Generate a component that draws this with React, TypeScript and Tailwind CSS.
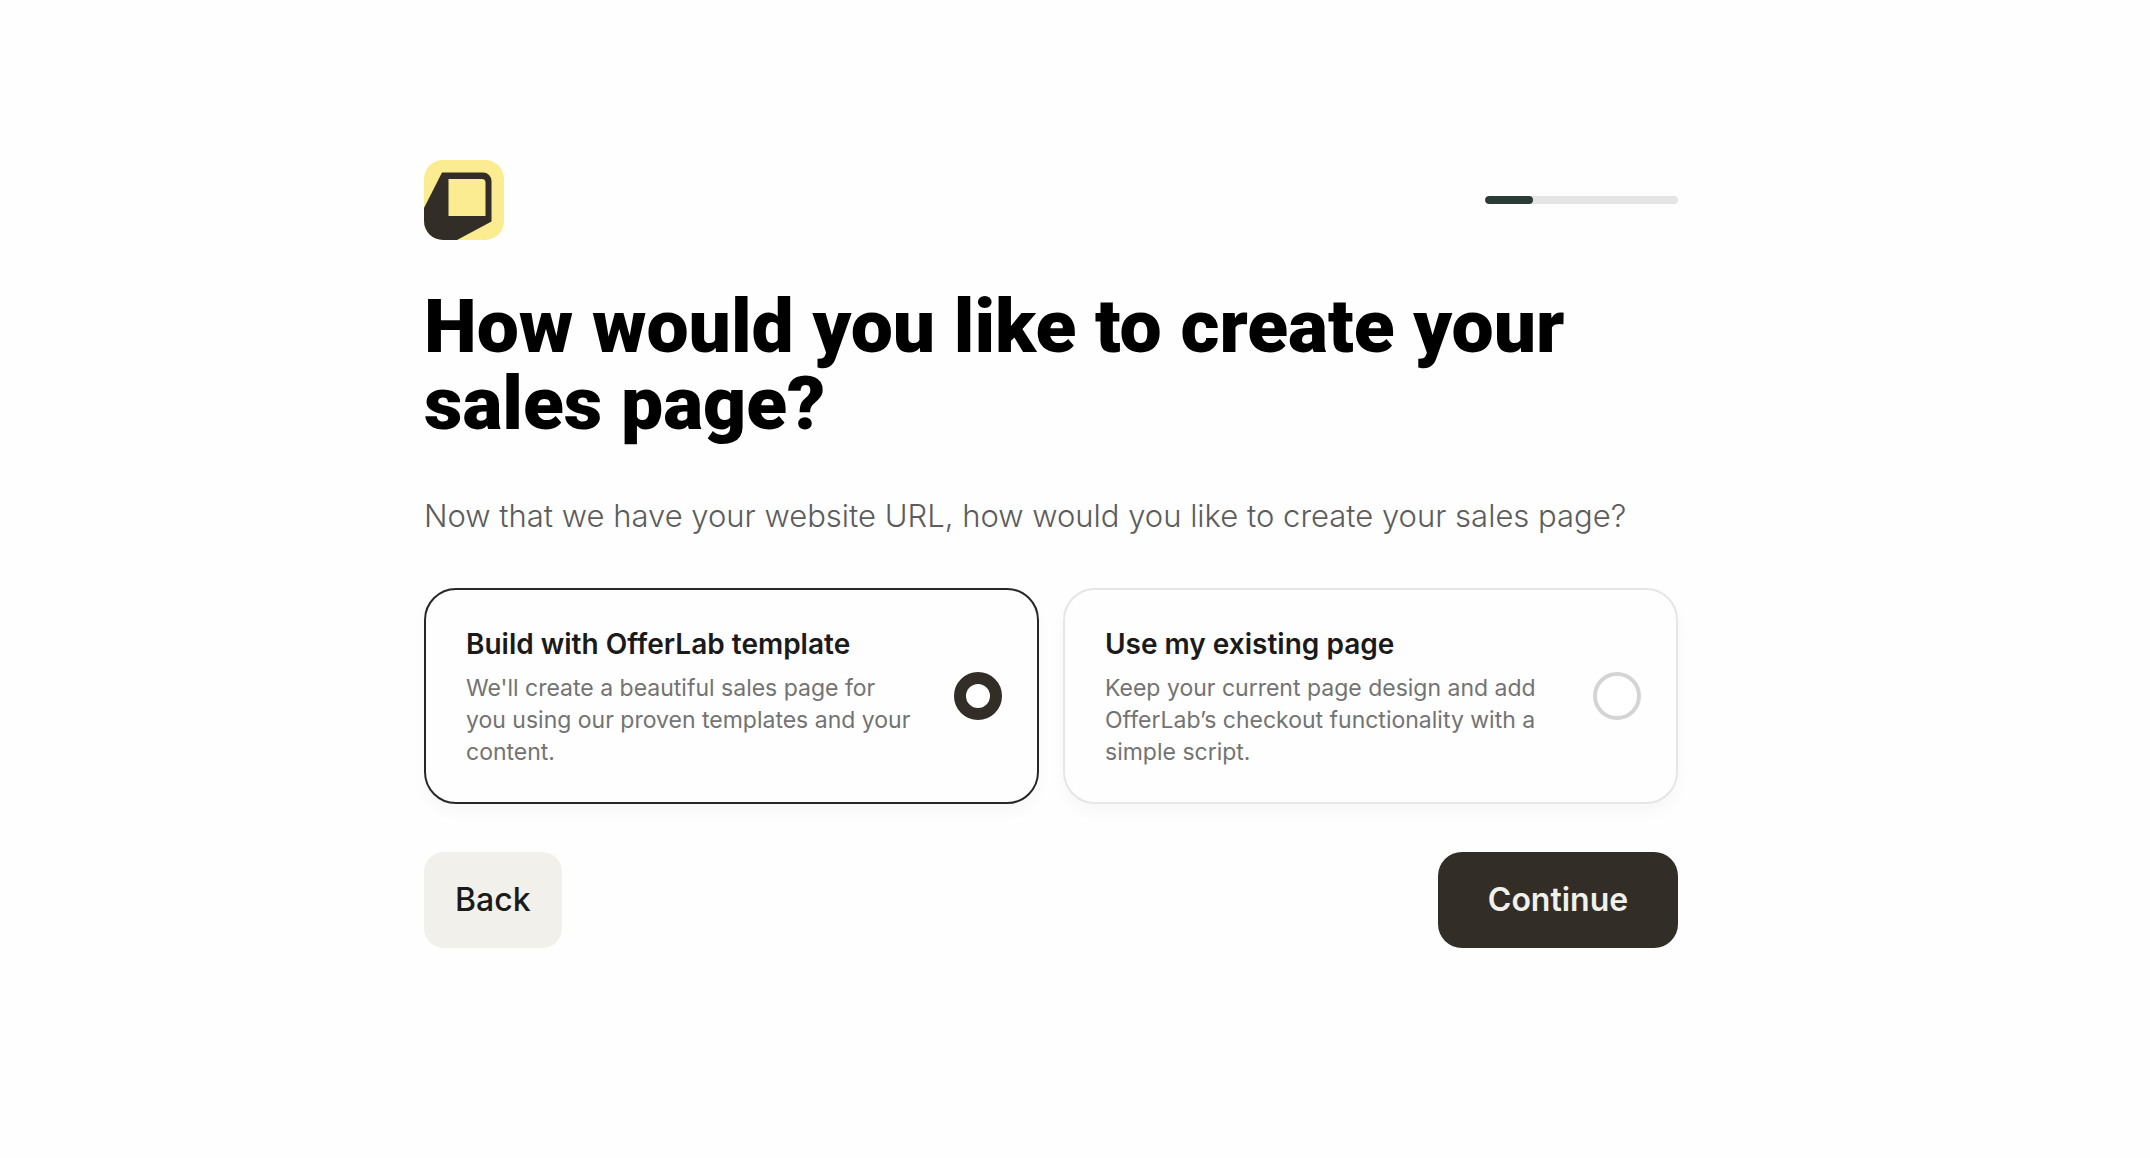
import { useState } from 'react'

interface Option {
  id: string
  title: string
  description: string
}

const OPTIONS: Option[] = [
  {
    id: 'template',
    title: 'Build with OfferLab template',
    description:
      "We'll create a beautiful sales page for you using our proven templates and your content.",
  },
  {
    id: 'existing',
    title: 'Use my existing page',
    description:
      'Keep your current page design and add OfferLab’s checkout functionality with a simple script.',
  },
]

function Logo() {
  return (
    <svg viewBox="0 0 80 80" className="size-20" role="img" aria-label="OfferLab">
      <defs>
        <clipPath id="logo-clip">
          <rect width="80" height="80" rx="19" />
        </clipPath>
      </defs>
      <g clipPath="url(#logo-clip)">
        <rect width="80" height="80" fill="#fbec91" />
        <path d="M18 12.5H59a8.5 8.5 0 0 1 8.5 8.5V61.5L33 80H0V48z" fill="#322d27" />
        <path d="M24.5 19H58a3.5 3.5 0 0 1 3.5 3.5V56H24.5z" fill="#fbec91" />
      </g>
    </svg>
  )
}

function Progress({ value }: { value: number }) {
  return (
    <div
      role="progressbar"
      aria-label="Setup progress"
      aria-valuenow={value}
      aria-valuemin={0}
      aria-valuemax={100}
      className="h-2 w-[193px] overflow-hidden rounded-full bg-[#e4e4e4]"
    >
      <div className="h-full rounded-full bg-[#2b3c36]" style={{ width: `${value}%` }} />
    </div>
  )
}

interface OptionCardProps {
  option: Option
  checked: boolean
  onSelect: () => void
}

function OptionCard({ option, checked, onSelect }: OptionCardProps) {
  return (
    <label
      className={`flex cursor-pointer items-center gap-9 rounded-[32px] border-2 bg-[#fefefe] py-[34px] pr-[35px] pl-10 shadow-[0_8px_16px_rgba(0,0,0,0.03)] ${
        checked ? 'border-[#272727]' : 'border-[#e6e6e6]'
      }`}
    >
      <span className="flex-1">
        <span className="block text-[28px] leading-10 font-semibold text-[#1a1a1a]">
          {option.title}
        </span>
        <span className="mt-2 block text-[23px] leading-8 text-[#737373]">
          {option.description}
        </span>
      </span>
      <input
        type="radio"
        name="page-source"
        checked={checked}
        onChange={onSelect}
        className="size-12 shrink-0 appearance-none rounded-full border-4 border-[#d4d4d4] bg-white checked:border-12 checked:border-[#322d27]"
      />
    </label>
  )
}

export default function App() {
  const [selected, setSelected] = useState('template')

  return (
    <div className="min-h-screen bg-[#fefefe] pt-40 pr-12 pb-20 font-['Inter',sans-serif]">
      <main className="mx-auto max-w-[1254px]">
        {/* Header */}
        <header className="flex items-center justify-between">
          <Logo />
          <Progress value={25} />
        </header>

        <h1 className="mt-12 font-['Roboto',sans-serif] text-[75px] leading-[77px] font-black text-black">
          How would you like to create your sales page?
        </h1>
        <p className="mt-[50px] text-[31px] leading-12 font-light text-[#5c5c5c]">
          Now that we have your website URL, how would you like to create your sales page?
        </p>

        {/* Options */}
        <div className="mt-12 grid grid-cols-2 gap-6">
          {OPTIONS.map((option) => (
            <OptionCard
              key={option.id}
              option={option}
              checked={selected === option.id}
              onSelect={() => setSelected(option.id)}
            />
          ))}
        </div>

        {/* Actions */}
        <div className="mt-12 flex items-center justify-between">
          <button className="h-24 rounded-[20px] bg-[#f1f0eb] px-[31px] text-[32px] font-medium text-[#1a1a1a]">
            Back
          </button>
          <button className="h-24 w-60 rounded-3xl bg-[#322d27] text-[32px] font-semibold text-[#f1f0eb]">
            Continue
          </button>
        </div>
      </main>
    </div>
  )
}
